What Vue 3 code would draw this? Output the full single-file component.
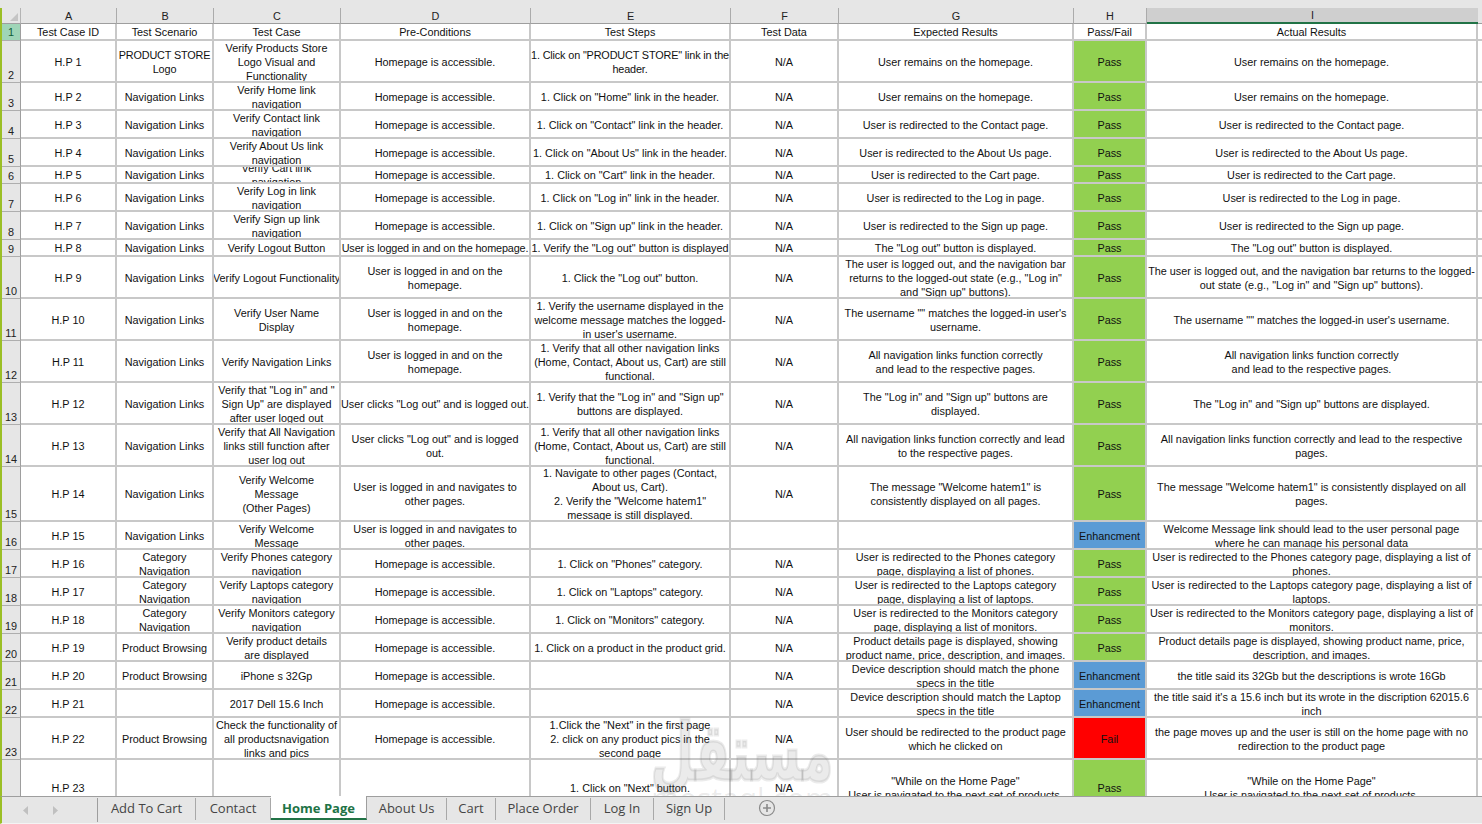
<script setup>
const columns = ['A', 'B', 'C', 'D', 'E', 'F', 'G', 'H', 'I']
const headings = ['Test Case ID', 'Test Scenario', 'Test Case', 'Pre-Conditions', 'Test Steps', 'Test Data', 'Expected Results', 'Pass/Fail', 'Actual Results']

const home = 'Homepage is accessible.'
const nav = 'Navigation Links'
const loggedIn = 'User is logged in and on the\nhomepage.'
const navigates = 'User is logged in and navigates to\nother pages.'

const rows = [
  ['H.P 1', 'PRODUCT STORE\nLogo', 'Verify Products Store\nLogo Visual and\nFunctionality', home, '1. Click on "PRODUCT STORE" link in the\nheader.', 'N/A', 'User remains on the homepage.', 'Pass', 'User remains on the homepage.'],
  ['H.P 2', nav, 'Verify Home link\nnavigation', home, '1. Click on "Home" link in the header.', 'N/A', 'User remains on the homepage.', 'Pass', 'User remains on the homepage.'],
  ['H.P 3', nav, 'Verify Contact link\nnavigation', home, '1. Click on "Contact" link in the header.', 'N/A', 'User is redirected to the Contact page.', 'Pass', 'User is redirected to the Contact page.'],
  ['H.P 4', nav, 'Verify About Us link\nnavigation', home, '1. Click on "About Us" link in the header.', 'N/A', 'User is redirected to the About Us page.', 'Pass', 'User is redirected to the About Us page.'],
  ['H.P 5', nav, 'Verify Cart link\nnavigation', home, '1. Click on "Cart" link in the header.', 'N/A', 'User is redirected to the Cart page.', 'Pass', 'User is redirected to the Cart page.'],
  ['H.P 6', nav, 'Verify Log in link\nnavigation', home, '1. Click on "Log in" link in the header.', 'N/A', 'User is redirected to the Log in page.', 'Pass', 'User is redirected to the Log in page.'],
  ['H.P 7', nav, 'Verify Sign up link\nnavigation', home, '1. Click on "Sign up" link in the header.', 'N/A', 'User is redirected to the Sign up page.', 'Pass', 'User is redirected to the Sign up page.'],
  ['H.P 8', nav, 'Verify Logout Button', 'User is logged in and on the homepage.', '1. Verify the "Log out" button is displayed', 'N/A', 'The "Log out" button is displayed.', 'Pass', 'The "Log out" button is displayed.'],
  ['H.P 9', nav, 'Verify Logout Functionality', loggedIn, '1. Click the "Log out" button.', 'N/A', 'The user is logged out, and the navigation bar\nreturns to the logged-out state (e.g., "Log in"\nand "Sign up" buttons).', 'Pass', 'The user is logged out, and the navigation bar returns to the logged-\nout state (e.g., "Log in" and "Sign up" buttons).'],
  ['H.P 10', nav, 'Verify User Name\nDisplay', loggedIn, '1. Verify the username displayed in the\nwelcome message matches the logged-\nin user\'s username.', 'N/A', 'The username "" matches the logged-in user\'s\nusername.', 'Pass', 'The username "" matches the logged-in user\'s username.'],
  ['H.P 11', nav, 'Verify Navigation Links', loggedIn, '1. Verify that all other navigation links\n(Home, Contact, About us, Cart) are still\nfunctional.', 'N/A', 'All navigation links function correctly\nand lead to the respective pages.', 'Pass', 'All navigation links function correctly\nand lead to the respective pages.'],
  ['H.P 12', nav, 'Verify that "Log in" and "\nSign Up" are displayed\nafter user loged out', 'User clicks "Log out" and is logged out.', '1. Verify that the "Log in" and "Sign up"\nbuttons are displayed.', 'N/A', 'The "Log in" and "Sign up" buttons are\ndisplayed.', 'Pass', 'The "Log in" and "Sign up" buttons are displayed.'],
  ['H.P 13', nav, 'Verify that All Navigation\nlinks still function after\nuser log out', 'User clicks "Log out" and is logged\nout.', '1. Verify that all other navigation links\n(Home, Contact, About us, Cart) are still\nfunctional.', 'N/A', 'All navigation links function correctly and lead\nto the respective pages.', 'Pass', 'All navigation links function correctly and lead to the respective\npages.'],
  ['H.P 14', nav, 'Verify Welcome\nMessage\n(Other Pages)', navigates, '1. Navigate to other pages (Contact,\nAbout us, Cart).\n2. Verify the "Welcome hatem1"\nmessage is still displayed.', 'N/A', 'The message "Welcome hatem1" is\nconsistently displayed on all pages.', 'Pass', 'The message "Welcome hatem1" is consistently displayed on all\npages.'],
  ['H.P 15', nav, 'Verify Welcome\nMessage', navigates, '', '', '', 'Enhancment', 'Welcome Message link should lead to the user personal page\nwhere he can manage his personal data'],
  ['H.P 16', 'Category\nNavigation', 'Verify Phones category\nnavigation', home, '1. Click on "Phones" category.', 'N/A', 'User is redirected to the Phones category\npage, displaying a list of phones.', 'Pass', 'User is redirected to the Phones category page, displaying a list of\nphones.'],
  ['H.P 17', 'Category\nNavigation', 'Verify Laptops category\nnavigation', home, '1. Click on "Laptops" category.', 'N/A', 'User is redirected to the Laptops category\npage, displaying a list of laptops.', 'Pass', 'User is redirected to the Laptops category page, displaying a list of\nlaptops.'],
  ['H.P 18', 'Category\nNavigation', 'Verify Monitors category\nnavigation', home, '1. Click on "Monitors" category.', 'N/A', 'User is redirected to the Monitors category\npage, displaying a list of monitors.', 'Pass', 'User is redirected to the Monitors category page, displaying a list of\nmonitors.'],
  ['H.P 19', 'Product Browsing', 'Verify product details\nare displayed', home, '1. Click on a product in the product grid.', 'N/A', 'Product details page is displayed, showing\nproduct name, price, description, and images.', 'Pass', 'Product details page is displayed, showing product name, price,\ndescription, and images.'],
  ['H.P 20', 'Product Browsing', 'iPhone s 32Gp', home, '', 'N/A', 'Device description should match the phone\nspecs in the title', 'Enhancment', 'the title said its 32Gb but the descriptions is wrote 16Gb'],
  ['H.P 21', '', '2017 Dell 15.6 Inch', home, '', 'N/A', 'Device description should match the Laptop\nspecs in the title', 'Enhancment', 'the title said it\'s a 15.6 inch but its wrote in the discription 62015.6\ninch'],
  ['H.P 22', 'Product Browsing', 'Check the functionality of\nall productsnavigation\nlinks and pics', home, '1.Click the "Next" in the first page\n2. click on any product pics in the\nsecond page', 'N/A', 'User should be redirected to the product page\nwhich he clicked on', 'Fail', 'the page moves up and the user is still on the home page with no\nredirection to the product page'],
  ['H.P 23', '', '', '', '1. Click on "Next" button.', 'N/A', '"While on the Home Page"\nUser is navigated to the next set of products.', 'Pass', '"While on the Home Page"\nUser is navigated to the next set of products.'],
]

const tabs = [
  { name: 'Add To Cart', width: 98 },
  { name: 'Contact', width: 75 },
  { name: 'Home Page', width: 96 },
  { name: 'About Us', width: 80 },
  { name: 'Cart', width: 49 },
  { name: 'Place Order', width: 95 },
  { name: 'Log In', width: 63 },
  { name: 'Sign Up', width: 71 },
]

// capitals come out wider here than in the screenshot, pull these cells in
const isTight = (value) => value.includes('PRODUCT STORE') || value.startsWith('User is logged in and on the homepage')
</script>

<template>
  <main class="excel">
    <div class="top-strip"></div>
    <section class="sheet">
      <div class="grid">
        <div class="corner">
          <svg width="8" height="8" viewBox="0 0 8 8"><path d="M8 0V8H0Z" fill="#c4c4c4" /></svg>
        </div>
        <div v-for="(col, i) in columns" :key="col" class="col-head" :class="{ selected: i === 8 }">{{ col }}</div>
        <div class="col-head filler"></div>

        <div class="row-head active">1</div>
        <div v-for="h in headings" :key="h" class="cell">{{ h }}</div>
        <div class="cell filler"></div>

        <template v-for="(row, r) in rows" :key="r">
          <div class="row-head">{{ r + 2 }}</div>
          <div
            v-for="(value, c) in row"
            :key="c"
            class="cell"
            :class="{ pass: value === 'Pass', enh: value === 'Enhancment', fail: value === 'Fail', tight: isTight(value) }"
          >{{ value }}</div>
          <div class="cell filler"></div>
        </template>
      </div>

      <div class="watermark">
        <span class="wm-ar">مستقل</span>
        <span class="wm-en">mostaql.com</span>
      </div>
    </section>

    <footer class="tabbar">
      <div class="arrows">
        <svg width="6" height="9" viewBox="0 0 6 9"><path d="M5 0V9L0 4.5Z" fill="#c0c0c0" /></svg>
        <svg width="6" height="9" viewBox="0 0 6 9"><path d="M1 0V9L6 4.5Z" fill="#c0c0c0" /></svg>
      </div>
      <div class="tabs">
        <div
          v-for="t in tabs"
          :key="t.name"
          class="tab"
          :class="{ current: t.name === 'Home Page' }"
          :style="{ width: t.width + 'px' }"
        >{{ t.name }}</div>
      </div>
      <svg class="add" width="18" height="18" viewBox="0 0 18 18">
        <circle cx="9" cy="9" r="7.5" fill="none" stroke="#8a8a8a" stroke-width="1.2" />
        <path d="M9 5V13M5 9H13" stroke="#8a8a8a" stroke-width="1.6" />
      </svg>
    </footer>
  </main>
</template>

<style>
html, body {
  margin: 0;
  overflow: hidden;
}
</style>

<style scoped>
.excel {
  display: flex;
  flex-direction: column;
  width: 1482px;
  height: 824px;
  background: #e6e6e6;
  font-family: "Liberation Sans", Arial, sans-serif;
  overflow: hidden;
}

.top-strip {
  height: 8px;
  flex: none;
}

.sheet {
  position: relative;
  flex: 1;
  min-height: 0;
  overflow: hidden;
  border-left: 2px solid #9bbf26;
}

.grid {
  display: grid;
  grid-template-columns: 19px 96px 97px 127px 190px 200px 108px 235px 73px 331px 4px;
  grid-template-rows: 16px 17px 42px 28px 28px 28px 17px 28px 28px 17px 42px 42px 42px 42px 42px 55px 28px 28px 28px 28px 28px 28px 28px 42px 57px;
  font-size: 10.85px;
  line-height: 14px;
  color: #111;
}

.corner {
  display: flex;
  justify-content: flex-end;
  align-items: flex-end;
  padding: 0 2px 2px 0;
  box-sizing: border-box;
  border-bottom: 1px solid #9e9e9e;
  border-right: 1px solid #b4b4b4;
}

.col-head {
  display: flex;
  align-items: center;
  justify-content: center;
  box-sizing: border-box;
  background: #e6e6e6;
  border-right: 1px solid #ababab;
  border-bottom: 1px solid #9e9e9e;
  color: #222;
}

.col-head.selected {
  background: #cfcfcf;
  border-bottom: 2px solid #217346;
  border-right: none;
}

.row-head {
  display: flex;
  align-items: flex-end;
  justify-content: center;
  box-sizing: border-box;
  background: #e6e6e6;
  border-bottom: 1px solid #aeaeae;
  border-right: 1px solid #9e9e9e;
  color: #222;
  overflow: hidden;
}

.row-head.active {
  background: #9fd5b7;
  color: #0f5c36;
  align-items: center;
}

.cell {
  display: flex;
  align-items: center;
  justify-content: center;
  box-sizing: border-box;
  padding-top: 1px;
  background: #fff;
  border-right: 2px solid #c8c8c8;
  border-bottom: 2px solid #c8c8c8;
  text-align: center;
  white-space: pre;
  overflow: hidden;
}

.cell.pass {
  background: #92d050;
}

.cell.enh {
  background: #5b9bd5;
}

.cell.fail {
  background: #ff0000;
}

.cell.tight {
  letter-spacing: -0.15px;
}

.filler {
  border-right: none;
}

.watermark {
  position: absolute;
  left: 640px;
  top: 715px;
  width: 200px;
  display: flex;
  flex-direction: column;
  align-items: center;
  color: rgba(110, 110, 110, 0.14);
  pointer-events: none;
}

.wm-ar {
  font-family: "DejaVu Sans", sans-serif;
  font-weight: 700;
  font-size: 50px;
  line-height: 60px;
  transform: scaleY(1.6);
  -webkit-text-stroke: 2px rgba(110, 110, 110, 0.14);
}

.wm-en {
  font-family: "Open Sans", sans-serif;
  font-size: 30px;
  line-height: 30px;
}

.tabbar {
  flex: none;
  display: flex;
  align-items: flex-start;
  height: 28px;
  box-sizing: border-box;
  border-top: 1px solid #9e9e9e;
  border-bottom: 1px solid #f4f4f4;
  border-left: 2px solid #9bbf26;
  font-family: "Open Sans", sans-serif;
  font-size: 13px;
  color: #444;
}

.arrows {
  display: flex;
  align-items: center;
  gap: 23px;
  width: 96px;
  height: 24px;
  padding-left: 21px;
  box-sizing: border-box;
  border-right: 1px solid #9e9e9e;
  margin-top: 1px;
}

.tabs {
  display: flex;
}

.tab {
  height: 22px;
  line-height: 21px;
  margin-top: 1px;
  box-sizing: border-box;
  border-right: 1px solid #a8a8a8;
  text-align: center;
}

.tab.current {
  height: 24px;
  margin-top: -1px;
  padding-top: 2px;
  background: #fff;
  border-right: 1px solid #9e9e9e;
  border-bottom: 2px solid #217346;
  color: #217346;
  font-weight: 700;
}

.add {
  margin: 2px 0 0 33px;
}
</style>
